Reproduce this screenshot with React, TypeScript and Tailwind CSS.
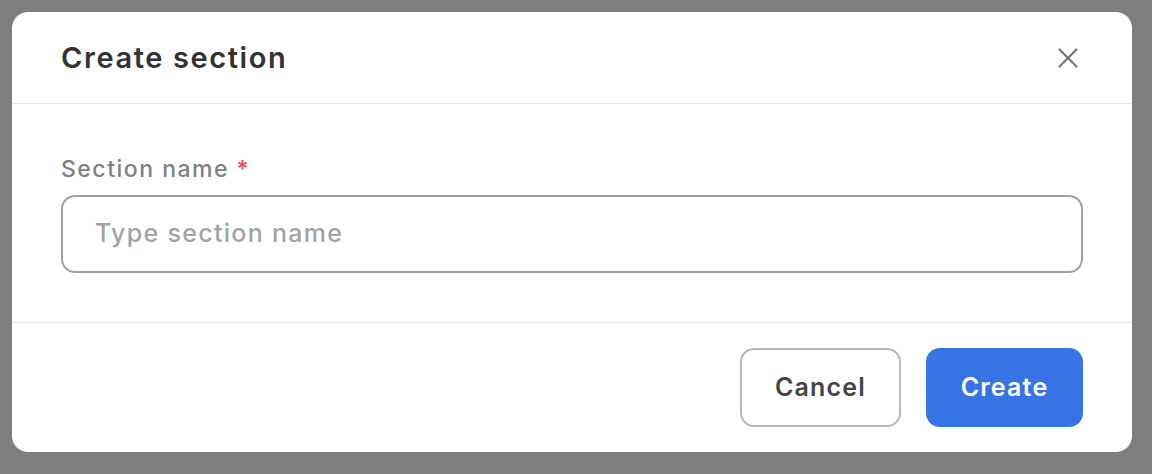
import { X } from "lucide-react";

export default function App() {
  return (
    <div
      className="w-[1152px] h-[474px] bg-[#7f7f7f] p-3"
      style={{ fontFamily: "Inter, 'Noto Sans', sans-serif" }}
    >
      <div className="w-[1120px] h-[440px] bg-white rounded-[16px] flex flex-col overflow-hidden">
        {/* header */}
        <div className="h-[92px] flex items-center justify-between pl-[49px] pr-[47px] border-b border-[#e3e3e3]">
          <div className="text-[29px] font-semibold text-[#333333] tracking-[1.6px]">Create section</div>
          <button className="text-[#777777]">
            <X size={34} strokeWidth={1.6} />
          </button>
        </div>

        {/* body */}
        <div className="h-[219px] px-[49px] pt-[50px] border-b border-[#e3e3e3]">
          <div className="text-[23px] font-medium text-[#808080] leading-[30px] tracking-[1.5px]">
            Section name <span className="text-[#e5484d]">*</span>
          </div>
          <div className="mt-[11px] h-[78px] w-full rounded-[14px] border-2 border-[#a0a0a0] flex items-center px-[32px]">
            <input
              className="w-full outline-none text-[25px] font-medium tracking-[1.3px] text-[#333] placeholder:text-[#a3a3a3] bg-transparent"
              placeholder="Type section name"
            />
          </div>
        </div>

        {/* footer */}
        <div className="flex-1 flex items-center justify-end gap-[25px] px-[49px]">
          <button className="w-[161px] h-[79px] rounded-[14px] border-2 border-[#b8b8b8] text-[25px] font-semibold tracking-[1.2px] text-[#444444]">
            Cancel
          </button>
          <button className="w-[157px] h-[79px] rounded-[14px] bg-[#3673e5] text-[25px] font-semibold tracking-[1.2px] text-white">
            Create
          </button>
        </div>
      </div>
    </div>
  );
}
